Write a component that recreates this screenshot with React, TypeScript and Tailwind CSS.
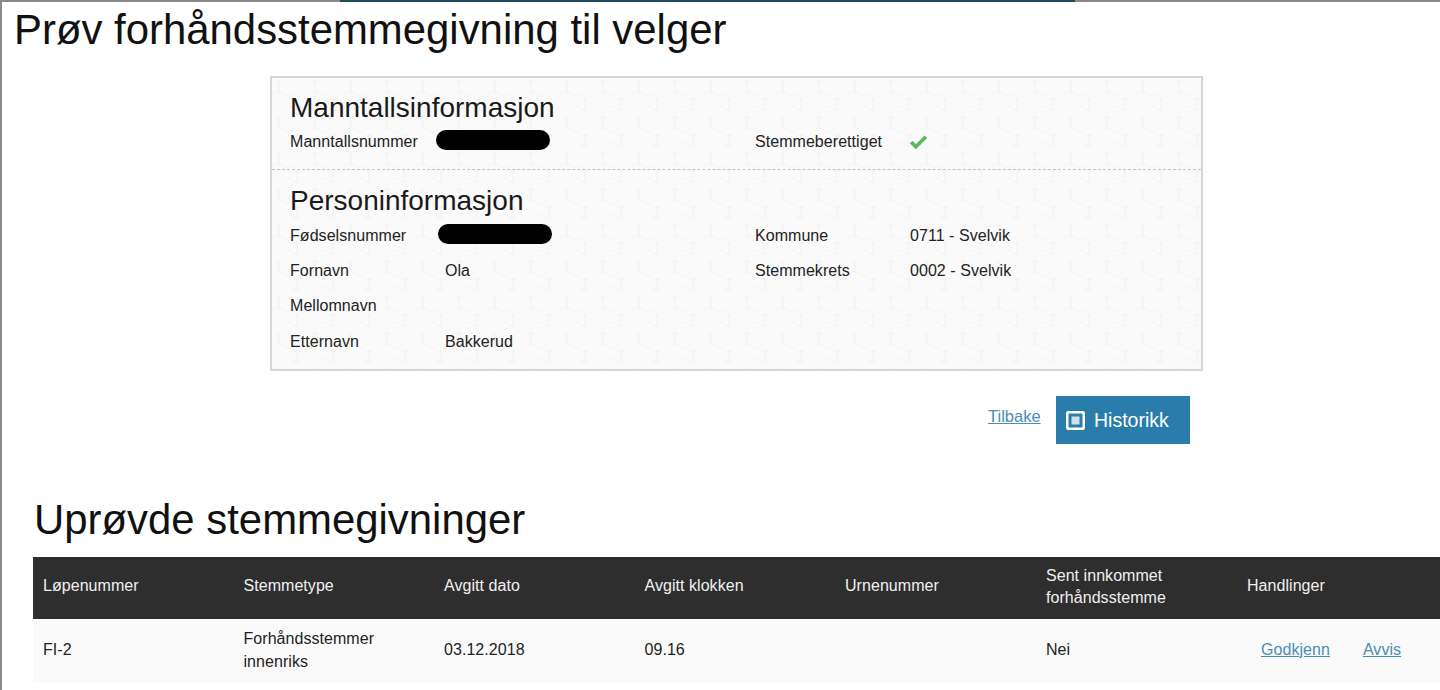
const F = "font-['Liberation_Sans',Arial,sans-serif]";

function Pattern() {
  return (
    <svg className="absolute inset-0 h-full w-full" aria-hidden="true">
      <defs>
        <pattern id="weave" width="36" height="36" patternUnits="userSpaceOnUse">
          <path d="M4 3h6M7 3v11M4 14h6M22 21h6M25 21v11M22 32h6" fill="none" stroke="#f0f0f0" strokeWidth="1" />
          <path d="M7 14l9 4 9-4M7 32l9-4 9 4" fill="none" stroke="#f4f4f4" strokeWidth="1" />
        </pattern>
      </defs>
      <rect width="100%" height="100%" fill="#fafafa" />
      <rect width="100%" height="100%" fill="url(#weave)" />
    </svg>
  );
}

function Pair({ label, value, redact }: { label: string; value?: string; redact?: string }) {
  return (
    <div className="flex h-[35.4px] items-center text-[16px] tracking-[0.05px] text-[#222]">
      <span className="w-[155px] shrink-0">{label}</span>
      {redact ? <span className={`h-[20px] w-[114px] rounded-full bg-black ${redact}`} /> : <span>{value}</span>}
    </div>
  );
}

const heads = ["Løpenummer", "Stemmetype", "Avgitt dato", "Avgitt klokken", "Urnenummer"];

export default function App() {
  return (
    <div className={`${F} h-[690px] w-[1440px] overflow-hidden border-l-2 border-[#8a8a8a] bg-white text-[#111]`}>
      <div className="-ml-[2px] flex h-[2px]">
        <div className="w-[340px] bg-[#8a8a8a]" />
        <div className="w-[735px] bg-[#1f4b5e]" />
        <div className="flex-1 bg-[#8a8a8a]" />
      </div>
      <h1 className="ml-[12px] mt-[5px] text-[41.9px] leading-[46px]">Prøv forhåndsstemmegivning til velger</h1>

      <section className="relative ml-[268px] mt-[23px] h-[295px] w-[933px] border-2 border-[#d6d6d6]">
        <Pattern />
        <div className="relative">
          <div className="h-[92px] border-b border-dashed border-[#c4c4c4] px-[18px] pt-[14px]">
            <h2 className="text-[28px] leading-[32px] text-[#1a1a1a]">Manntallsinformasjon</h2>
            <div className="flex">
              <div className="w-[465px]"><Pair label="Manntallsnummer" redact="-ml-[9px] -mt-[4px]" /></div>
              <div className="flex h-[35.4px] items-center text-[16px] tracking-[0.05px] text-[#222]">
                <span className="w-[154px]">Stemmeberettiget</span>
                <svg width="19" height="15" viewBox="0 0 18 14" aria-hidden="true"><path d="M2 7.5l4.5 4.5L16 2.5" fill="none" stroke="#5cb85c" strokeWidth="3.4" /></svg>
              </div>
            </div>
          </div>
          <div className="px-[18px] pt-[15px]">
            <h2 className="text-[28px] leading-[32px] text-[#1a1a1a]">Personinformasjon</h2>
            <div className="flex pt-[1px]">
              <div className="w-[465px]">
                <Pair label="Fødselsnummer" redact="-ml-[7px] -mt-[3px]" />
                <Pair label="Fornavn" value="Ola" />
                <Pair label="Mellomnavn" />
                <Pair label="Etternavn" value="Bakkerud" />
              </div>
              <div>
                <Pair label="Kommune" value="0711 - Svelvik" />
                <Pair label="Stemmekrets" value="0002 - Svelvik" />
              </div>
            </div>
          </div>
        </div>
      </section>

      <div className="ml-[986px] mt-[25px] flex w-[202px] items-start justify-between">
        <a className="mt-[10px] text-[16.5px] leading-[20px] text-[#4a8db5] underline">Tilbake</a>
        <button className="flex h-[48px] w-[134px] items-center gap-[9px] bg-[#2a7dab] pl-[10px] pt-[2px] text-[19.5px] text-white">
          <svg className="-mt-[2px]" width="19" height="19" viewBox="0 0 19 19" aria-hidden="true"><rect x="1.25" y="1.25" width="16.5" height="16.5" rx="1" fill="none" stroke="#fff" strokeWidth="2.5" /><rect x="5.5" y="5.5" width="8" height="8" fill="#cfe0ea" /></svg>
          Historikk
        </button>
      </div>

      <h2 className="ml-[32px] mt-[51px] text-[41.9px] leading-[50px]">Uprøvde stemmegivninger</h2>
      <div className="ml-[31px] mt-[12px] grid h-[62px] grid-cols-[200.5px_200.5px_200.5px_200.5px_201px_201px_1fr] items-center bg-[#2e2e2e] pb-[4px] pl-[10px] text-[16px] leading-[22px] tracking-[0.05px] text-[#f0f0f0]">
        {heads.map((h) => <div key={h}>{h}</div>)}
        <div className="pt-[2px]">Sent innkommet<br />forhåndsstemme</div>
        <div>Handlinger</div>
      </div>
      <div className="ml-[31px] grid h-[64px] grid-cols-[200.5px_200.5px_200.5px_200.5px_201px_201px_1fr] items-center bg-[#fafafa] pb-[4px] pl-[10px] text-[16px] leading-[23px] tracking-[0.05px] text-[#222]">
        <div>FI-2</div>
        <div className="pt-[2px]">Forhåndsstemmer<br />innenriks</div>
        <div>03.12.2018</div>
        <div>09.16</div>
        <div />
        <div>Nei</div>
        <div className="flex gap-[33px] pl-[14px] text-[#4a8db5] underline">
          <a>Godkjenn</a>
          <a>Avvis</a>
        </div>
      </div>
    </div>
  );
}
